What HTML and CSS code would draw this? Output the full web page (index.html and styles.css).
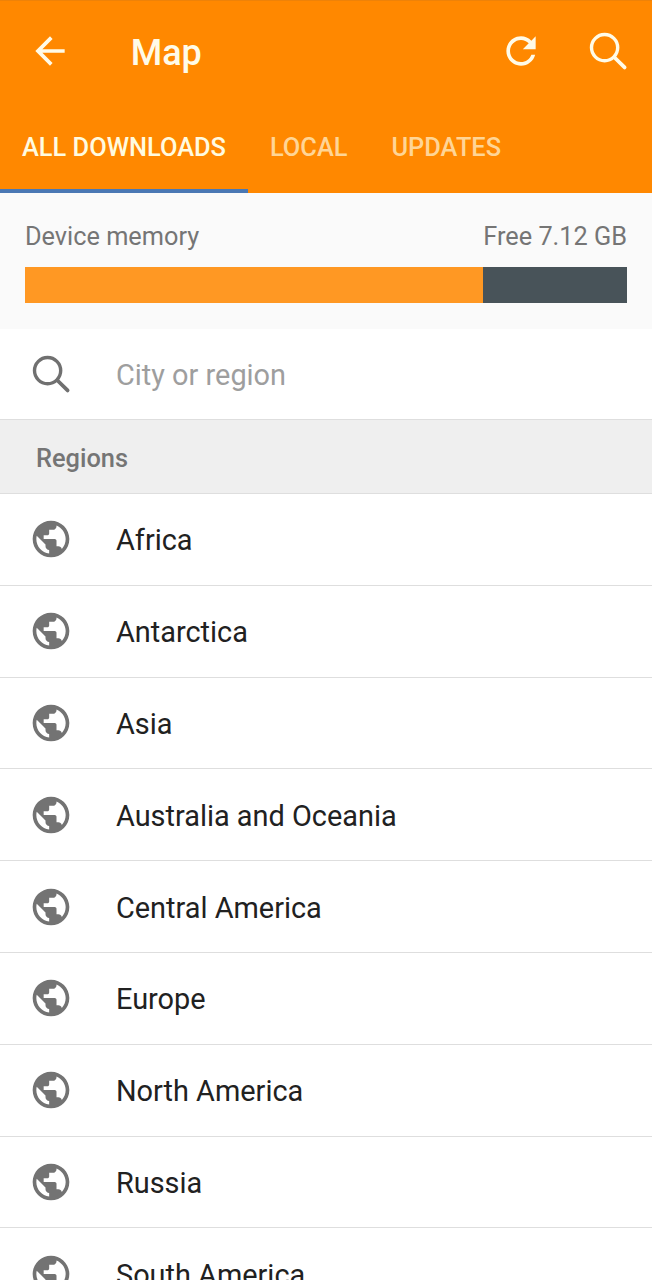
FILE: index.html
```
<!DOCTYPE html>
<html lang="en">
<head>
<meta charset="utf-8">
<title>Map</title>
<link rel="stylesheet" href="styles.css">
</head>
<body>
<svg class="defs" width="0" height="0">
  <symbol id="globe" viewBox="0 0 24 24"><path d="M12 2C6.48 2 2 6.48 2 12s4.48 10 10 10 10-4.48 10-10S17.52 2 12 2zm-1 17.93c-3.95-.49-7-3.85-7-7.93 0-.62.08-1.21.21-1.79L9 15v1c0 1.1.9 2 2 2v1.93zm6.9-2.54c-.26-.81-1-1.39-1.9-1.39h-1v-3c0-.55-.45-1-1-1H8v-2h2c.55 0 1-.45 1-1V7h2c1.1 0 2-.9 2-2v-.41c2.93 1.19 5 4.06 5 7.41 0 2.08-.8 3.97-2.1 5.39z"/></symbol>
  <symbol id="search" viewBox="0 0 44 44"><g fill="none" stroke="currentColor" stroke-width="3.4"><circle cx="18.6" cy="18.6" r="13.1"/><path stroke-width="3.8" stroke-linecap="round" d="M28.5 28.5L38.6 38.4"/></g></symbol>
</svg>
<header class="appbar">
  <div class="toolbar">
    <svg class="icon" viewBox="0 0 24 24"><path d="M20 11H7.83l5.59-5.59L12 4l-8 8 8 8 1.41-1.41L7.83 13H20v-2z"/></svg>
    <h1 class="title">Map</h1>
    <svg class="icon" viewBox="0 0 24 24"><path d="M17.65 6.35C16.2 4.9 14.21 4 12 4c-4.42 0-7.99 3.58-7.99 8s3.57 8 7.99 8c3.73 0 6.84-2.55 7.73-6h-2.08c-.82 2.33-3.04 4-5.65 4-3.31 0-6-2.69-6-6s2.69-6 6-6c1.66 0 3.14.69 4.22 1.78L13 11h7V4l-2.35 2.35z"/></svg>
    <svg class="icon find"><use href="#search"/></svg>
  </div>
  <nav class="tabs">
    <span class="tab active">ALL DOWNLOADS</span>
    <span class="tab">LOCAL</span>
    <span class="tab">UPDATES</span>
  </nav>
</header>
<section class="memory">
  <div class="memory-text"><span>Device memory</span><span>Free 7.12 GB</span></div>
  <div class="bar"><div class="used" style="width:76%"></div></div>
</section>
<div class="search"><svg class="icon"><use href="#search"/></svg><span class="label">City or region</span></div>
<h2 class="heading">Regions</h2>
<ul class="list">
  <li><svg class="icon"><use href="#globe"/></svg><span class="label">Africa</span></li>
  <li><svg class="icon"><use href="#globe"/></svg><span class="label">Antarctica</span></li>
  <li><svg class="icon"><use href="#globe"/></svg><span class="label">Asia</span></li>
  <li><svg class="icon"><use href="#globe"/></svg><span class="label">Australia and Oceania</span></li>
  <li><svg class="icon"><use href="#globe"/></svg><span class="label">Central America</span></li>
  <li><svg class="icon"><use href="#globe"/></svg><span class="label">Europe</span></li>
  <li><svg class="icon"><use href="#globe"/></svg><span class="label">North America</span></li>
  <li><svg class="icon"><use href="#globe"/></svg><span class="label">Russia</span></li>
  <li><svg class="icon"><use href="#globe"/></svg><span class="label">South America</span></li>
</ul>
</body>
</html>
```
FILE: styles.css
```
* { box-sizing: border-box; }
body {
  margin: 0;
  height: 1280px;
  overflow: hidden;
  background: #fff;
  color: #212121;
  font-family: Roboto, sans-serif;
}
.defs { display: block; }
.icon {
  width: 44px;
  height: 44px;
  flex: none;
  fill: currentColor;
}
.appbar {
  height: 193px;
  background: #ff8800;
  color: #fffbe8;
  border-top: 1px solid #ee8208;
}
.toolbar {
  height: 100px;
  padding: 0 21.6px 0 28.4px;
  display: flex;
  align-items: center;
}
.title {
  margin: 4px auto 0 58.3px;
  font-size: 36px;
  font-weight: 500;
  line-height: 44px;
}
.find { margin-left: 43px; }
.tabs {
  height: 92px;
  display: flex;
  font-size: 25.4px;
  font-weight: 500;
}
.tab {
  padding: 0 22px;
  line-height: 92px;
  color: #ffd596;
}
.tab.active {
  color: #fffbe0;
  border-bottom: 4px solid #4a78b4;
}
.memory {
  height: 136px;
  padding: 26px 25px 0;
  background: #fafafa;
  color: #757575;
}
.memory-text {
  height: 48px;
  display: flex;
  justify-content: space-between;
  font-size: 25.3px;
  line-height: 35px;
}
.bar { height: 36px; background: #485359; }
.used { height: 100%; background: #ff9823; }
.search {
  height: 91px;
  padding-left: 28.6px;
  display: flex;
  align-items: center;
  gap: 43.4px;
  border-bottom: 1px solid #dedede;
  color: #9e9e9e;
  font-size: 28.9px;
}
.label { padding-top: 2px; }
.search .icon { color: #707070; }
.heading {
  margin: 0;
  height: 74px;
  padding-left: 36px;
  border-bottom: 1px solid #dedede;
  background: #efefef;
  color: #757575;
  font-size: 25.4px;
  font-weight: 500;
  line-height: 76px;
}
.list { margin: 0; padding: 0; list-style: none; }
.list li {
  height: 91.8px;
  padding-left: 28.6px;
  display: flex;
  align-items: center;
  gap: 43.4px;
  border-bottom: 1px solid #dedede;
  font-size: 28.9px;
}
.list .icon { color: #737373; }
```
